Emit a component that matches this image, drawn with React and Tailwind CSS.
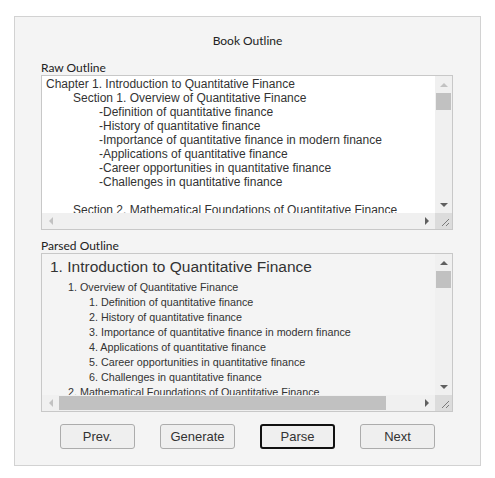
import React from "react";

const rawLines = [
  { text: "Chapter 1. Introduction to Quantitative Finance", indent: 0 },
  { text: "Section 1. Overview of Quantitative Finance", indent: 1 },
  { text: "-Definition of quantitative finance", indent: 2 },
  { text: "-History of quantitative finance", indent: 2 },
  { text: "-Importance of quantitative finance in modern finance", indent: 2 },
  { text: "-Applications of quantitative finance", indent: 2 },
  { text: "-Career opportunities in quantitative finance", indent: 2 },
  { text: "-Challenges in quantitative finance", indent: 2 },
  { text: "", indent: 0 },
  { text: "Section 2. Mathematical Foundations of Quantitative Finance", indent: 1 },
];

const topics = [
  "1. Definition of quantitative finance",
  "2. History of quantitative finance",
  "3. Importance of quantitative finance in modern finance",
  "4. Applications of quantitative finance",
  "5. Career opportunities in quantitative finance",
  "6. Challenges in quantitative finance",
];

const indents = ["pl-0", "pl-[27px]", "pl-[53px]"];

const Arrow = ({ dir, light }) => {
  const color = light ? "#c2c2c2" : "#606060";
  const pts = {
    up: "0,4 4,0 8,4",
    down: "0,0 8,0 4,4",
    left: "4,0 4,8 0,4",
    right: "0,0 0,8 4,4",
  }[dir];
  const vert = dir === "up" || dir === "down";
  return (
    <svg width={vert ? 8 : 4} height={vert ? 4 : 8} viewBox={vert ? "0 0 8 4" : "0 0 4 8"}>
      <polygon points={pts} fill={color} />
    </svg>
  );
};

const Grip = () => (
  <svg width="17" height="17" viewBox="0 0 17 17">
    <line x1="7" y1="14" x2="14" y2="7" stroke="#7a7a7a" strokeWidth="1" />
    <line x1="11" y1="14" x2="14" y2="11" stroke="#7a7a7a" strokeWidth="1" />
  </svg>
);

// fake scrolling box with windows-style bars
const ScrollBox = ({ children, bg, height, hThumb, upLight }) => (
  <div className={`ml-[26px] w-[412px] ${height} border border-[#c8c8c8] flex flex-col ${bg}`}>
    <div className="flex flex-1 min-h-0">
      <div className="flex-1 overflow-hidden">{children}</div>
      <div className="w-[17px] bg-[#f0f0f0] flex flex-col items-center">
        <div className="h-[17px] flex items-center justify-center">
          <Arrow dir="up" light={upLight} />
        </div>
        <div className="w-[15px] h-[17px] bg-[#c1c1c1]" />
        <div className="flex-1" />
        <div className="h-[17px] flex items-center justify-center">
          <Arrow dir="down" />
        </div>
      </div>
    </div>
    <div className="h-[16px] flex bg-[#f0f0f0]">
      <div className="w-[17px] flex items-center justify-center">
        <Arrow dir="left" light />
      </div>
      <div className="flex-1 flex items-center">
        {hThumb && <div className="w-[327px] h-[14px] bg-[#c1c1c1]" />}
      </div>
      <div className="w-[17px] flex items-center justify-center">
        <Arrow dir="right" />
      </div>
      <div className="w-[17px] bg-[#dcdcdc] flex items-end justify-end">
        <Grip />
      </div>
    </div>
  </div>
);

const Btn = ({ label, active }) => (
  <button
    className={`w-[75px] h-[25px] rounded-[3px] bg-[#efefef] text-[13px] text-[#333] ${
      active ? "border-2 border-[#111]" : "border border-[#acacac]"
    }`}
  >
    {label}
  </button>
);

export default function App() {
  return (
    <div className="w-[495px] h-[478px] bg-white pt-[16px] pl-[14px] font-['Liberation_Sans',Arial,sans-serif]">
      <div className="w-[467px] h-[450px] border border-[#d2d2d2] bg-[#f4f4f4] flex flex-col">
        <div className="mt-[16px] h-[16px] leading-[16px] text-center text-[12px] text-[#222] font-['Lato',sans-serif]">
          Book Outline
        </div>
        <div className="mt-[11px] ml-[26px] h-[15px] leading-[15px] text-[12px] text-[#222] font-['Lato',sans-serif]">
          Raw Outline
        </div>
        <ScrollBox bg="bg-white" height="h-[155px]" upLight>
          <div className="pt-[1px] pl-[4px] text-[12px] leading-[14px] text-[#333] whitespace-nowrap">
            {rawLines.map((l, i) => (
              <div key={i} className={`h-[14px] ${indents[l.indent]}`}>
                {l.text}
              </div>
            ))}
          </div>
        </ScrollBox>
        <div className="mt-[8px] ml-[26px] h-[15px] leading-[15px] text-[12px] text-[#222] font-['Lato',sans-serif]">
          Parsed Outline
        </div>
        <ScrollBox bg="bg-[#f4f4f4]" height="h-[159px]" hThumb>
          <div className="pl-[8px] pt-[2px] text-[#333] whitespace-nowrap">
            <div className="h-[22px] leading-[22px] text-[15.5px]">
              1. Introduction to Quantitative Finance
            </div>
            <div className="pl-[18px] text-[10.75px] leading-[15px] mt-[2px]">
              <div>1. Overview of Quantitative Finance</div>
              <div className="pl-[21px]">
                {topics.map((t) => (
                  <div key={t}>{t}</div>
                ))}
              </div>
              <div>2. Mathematical Foundations of Quantitative Finance</div>
            </div>
          </div>
        </ScrollBox>
        <div className="mt-[12px] ml-[45px] flex gap-[25px]">
          <Btn label="Prev." />
          <Btn label="Generate" />
          <Btn label="Parse" active />
          <Btn label="Next" />
        </div>
      </div>
    </div>
  );
}
